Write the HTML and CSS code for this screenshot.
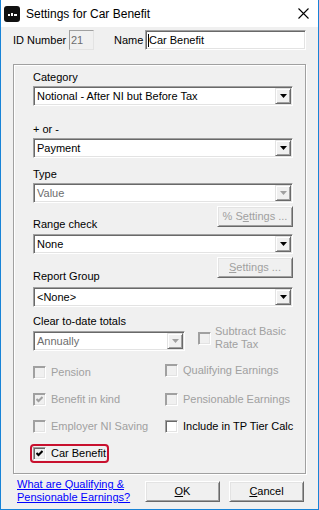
FILE: index.html
```html
<!DOCTYPE html>
<html>

<head>
    <title>Settings for Car Benefit</title>
    <link rel="stylesheet" href="styles.css">
</head>

<body>
    <div class="window">

        <!-- title bar -->
        <div class="titlebar">
            <span class="app_icon">
                <svg width="16" height="16" viewBox="0 0 16 16">
                    <rect x="0" y="0" width="16" height="16" rx="3" fill="#111"/>
                    <rect x="4" y="8" width="2" height="2" fill="#fff"/>
                    <rect x="7" y="7" width="2" height="3" fill="#fff"/>
                    <rect x="10" y="8" width="3" height="2" fill="#fff"/>
                </svg>
            </span>
            <span class="title">Settings for Car Benefit</span>
            <span class="close">
                <svg width="11" height="11" viewBox="0 0 11 11">
                    <path d="M0.5 0.5 L10.5 10.5 M10.5 0.5 L0.5 10.5" stroke="#000" stroke-width="1.1"/>
                </svg>
            </span>
        </div>

        <div class="client">

            <!-- id + name -->
            <div class="id_row">
                <span class="id_label">ID Number</span>
                <div class="edit edit_disabled id_edit">21</div>
                <span class="name_label">Name</span>
                <div class="edit name_edit"><span class="caret"></span>Car Benefit</div>
            </div>

            <!-- settings group -->
            <div class="group">
                <div class="label">Category</div>
                <div class="combo">
                    <span class="combo_text">Notional - After NI but Before Tax</span>
                    <span class="drop"><svg width="7" height="4" viewBox="0 0 7 4"><polygon points="0,0 7,0 3.5,4" fill="#000"/></svg></span>
                </div>

                <div class="label gap_17">+ or -</div>
                <div class="combo">
                    <span class="combo_text">Payment</span>
                    <span class="drop"><svg width="7" height="4" viewBox="0 0 7 4"><polygon points="0,0 7,0 3.5,4" fill="#000"/></svg></span>
                </div>

                <div class="label gap_10">Type</div>
                <div class="combo combo_disabled">
                    <span class="combo_text">Value</span>
                    <span class="drop"><svg width="7" height="4" viewBox="0 0 7 4"><polygon points="0,0 7,0 3.5,4" fill="#a0a0a0"/></svg></span>
                </div>

                <div class="label_row row_range">
                    <div class="label">Range check</div>
                    <div class="btn btn_side btn_disabled">% S<u>e</u>ttings ...</div>
                </div>
                <div class="combo gap_3">
                    <span class="combo_text">None</span>
                    <span class="drop"><svg width="7" height="4" viewBox="0 0 7 4"><polygon points="0,0 7,0 3.5,4" fill="#000"/></svg></span>
                </div>

                <div class="label_row row_report">
                    <div class="label">Report Group</div>
                    <div class="btn btn_side btn_disabled"><u>S</u>ettings ...</div>
                </div>
                <div class="combo gap_4">
                    <span class="combo_text">&lt;None&gt;</span>
                    <span class="drop"><svg width="7" height="4" viewBox="0 0 7 4"><polygon points="0,0 7,0 3.5,4" fill="#000"/></svg></span>
                </div>

                <!-- clear totals -->
                <div class="clear_row">
                    <div class="clear_col">
                        <div class="label">Clear to-date totals</div>
                        <div class="combo combo_disabled">
                            <span class="combo_text">Annually</span>
                            <span class="drop"><svg width="7" height="4" viewBox="0 0 7 4"><polygon points="0,0 7,0 3.5,4" fill="#a0a0a0"/></svg></span>
                        </div>
                    </div>
                    <div class="check check_disabled check_two">
                        <span class="box"></span>
                        <span>Subtract Basic<br>Rate Tax</span>
                    </div>
                </div>

                <!-- checkboxes -->
                <div class="checks">
                    <div class="check check_disabled"><span class="box"></span><span>Pension</span></div>
                    <div class="check check_disabled raise"><span class="box"></span><span>Qualifying Earnings</span></div>

                    <div class="check check_disabled">
                        <span class="box"><svg width="7" height="7" viewBox="0 0 7 7"><polyline points="0.5,3 2.5,5 6.5,1" fill="none" stroke="#a0a0a0" stroke-width="2"/></svg></span>
                        <span>Benefit in kind</span>
                    </div>
                    <div class="check check_disabled"><span class="box"></span><span>Pensionable Earnings</span></div>

                    <div class="check check_disabled"><span class="box"></span><span>Employer NI Saving</span></div>
                    <div class="check"><span class="box"></span><span>Include in TP Tier Calc</span></div>

                    <div class="highlight">
                        <div class="check">
                            <span class="box box_pressed"><svg width="7" height="7" viewBox="0 0 7 7"><polyline points="0.5,3 2.5,5 6.5,1" fill="none" stroke="#000" stroke-width="2"/></svg></span>
                            <span>Car Benefit</span>
                        </div>
                    </div>
                </div>
            </div>

            <!-- footer -->
            <div class="footer">
                <a class="help_link" href="#">What are Qualifying &amp;<br>Pensionable Earnings?</a>
                <div class="footer_buttons">
                    <div class="btn"><u>O</u>K</div>
                    <div class="btn"><u>C</u>ancel</div>
                </div>
            </div>
        </div>
    </div>
</body>

</html>
```

FILE: styles.css
```css
* {
    margin: 0;
    padding: 0;
    box-sizing: border-box;
}

body {
    width: 319px;
    height: 510px;
    overflow: hidden;
    background: #fff;
    font-family: "Liberation Sans", Arial, sans-serif;
    font-size: 11px;
    line-height: 13px;
    color: #000;
}

.window {
    width: 319px;
    height: 510px;
    display: flex;
    flex-direction: column;
    border: 1px solid #1883d7;
    border-top: none;
    background: #f0f0f0;
}

/* title bar */
.titlebar {
    height: 27px;
    display: flex;
    align-items: center;
    padding-left: 3px;
    background: #fff;
}

.app_icon {
    width: 16px;
    height: 16px;
    display: flex;
}

.title {
    margin-left: 6px;
    font-size: 12px;
    line-height: 14px;
}

.close {
    margin-left: auto;
    margin-right: 9px;
    display: flex;
}

.client {
    flex: 1;
    padding: 3px 12px 0;
}

/* id row */
.id_row {
    display: flex;
    align-items: center;
    height: 20px;
}

.id_label {
    width: 56px;
}

.name_label {
    width: 31px;
    margin-left: 20px;
}

.edit {
    height: 20px;
    padding-left: 2px;
    display: flex;
    align-items: center;
    border: 1px solid;
    border-color: #a0a0a0 #fff #fff #a0a0a0;
    box-shadow: inset 1px 1px #696969, inset -1px -1px #e3e3e3;
    background: #fff;
}

.edit_disabled {
    color: #6d6d6d;
    background: #f0f0f0;
    border-color: #a0a0a0 #e3e3e3 #e3e3e3 #a0a0a0;
    box-shadow: none;
}

.id_edit {
    width: 25px;
    padding-left: 1px;
}

.name_edit {
    flex: 1;
}

.caret {
    width: 1px;
    height: 13px;
    background: #000;
    margin-right: 0;
}

/* group box */
.group {
    margin-top: 14px;
    padding: 6px 12px 13px 19px;
    border: 1px solid #a0a0a0;
    box-shadow: inset 1px 1px #fff, 1px 1px #fff;
}

.label {
    height: 13px;
    white-space: nowrap;
}

.gap_17 {
    margin-top: 17px;
}

.gap_10 {
    margin-top: 10px;
}

.gap_3 {
    margin-top: 3px !important;
}

.gap_4 {
    margin-top: 4px !important;
}

.combo {
    margin-top: 2px;
    height: 20px;
    display: flex;
    padding: 1px;
    border: 1px solid;
    border-color: #a0a0a0 #fff #fff #a0a0a0;
    box-shadow: inset 1px 1px #696969, inset -1px -1px #e3e3e3;
    background: #fff;
}

.combo_text {
    flex: 1;
    padding-left: 2px;
    display: flex;
    align-items: center;
    white-space: nowrap;
}

.combo_disabled .combo_text {
    color: #6d6d6d;
}

.drop {
    width: 16px;
    display: flex;
    align-items: center;
    justify-content: center;
    border: 1px solid;
    border-color: #e3e3e3 #696969 #696969 #e3e3e3;
    box-shadow: inset 1px 1px #fff, inset -1px -1px #a0a0a0;
    background: #f0f0f0;
}

/* label + side button rows */
.label_row {
    display: flex;
    justify-content: space-between;
    margin-top: 3px;
}

.row_range {
    height: 25px;
}

.row_report {
    height: 26px;
}

.label_row .label {
    align-self: flex-end;
}

.btn {
    width: 75px;
    height: 21px;
    display: flex;
    align-items: center;
    justify-content: center;
    border: 1px solid;
    border-color: #fff #696969 #696969 #fff;
    box-shadow: inset 1px 1px #e3e3e3, inset -1px -1px #a0a0a0;
    background: #f0f0f0;
    white-space: nowrap;
}

.btn_side {
    width: 76px;
    align-self: flex-start;
}

.btn_disabled {
    color: #a0a0a0;
}

/* clear to-date row */
.clear_row {
    display: flex;
    align-items: flex-end;
    margin-top: 8px;
}

.clear_col {
    width: 152px;
}

.clear_col .combo {
    margin-top: 3px;
}

/* checkboxes */
.check {
    display: flex;
    align-items: center;
    gap: 5px;
    height: 13px;
    white-space: nowrap;
}

.check_disabled {
    color: #a0a0a0;
}

.check_two {
    height: 26px;
    margin-left: 13px;
    gap: 4px;
}

.box {
    width: 13px;
    height: 13px;
    flex: none;
    display: flex;
    align-items: center;
    justify-content: center;
    border: 1px solid;
    border-color: #a0a0a0 #fff #fff #a0a0a0;
    box-shadow: inset 1px 1px #696969, inset -1px -1px #e3e3e3;
    background: #fff;
}

.check_disabled .box {
    background: #f0f0f0;
    box-shadow: inset 1px 1px #a0a0a0, inset -1px -1px #e3e3e3;
}

.box_pressed {
    background: #f0f0f0;
}

.checks {
    margin-top: 15px;
    display: grid;
    grid-template-columns: 132px 1fr;
    row-gap: 14px;
}

.raise {
    margin-top: -2px;
}

.highlight {
    justify-self: start;
    margin: -3px;
    padding: 1px;
    border: 2px solid #c8102e;
    border-radius: 4px;
}

.highlight .check {
    padding-right: 0;
}

/* footer */
.footer {
    display: flex;
    margin-top: 4px;
}

.help_link {
    padding-left: 4px;
    color: #0000ff;
    white-space: nowrap;
}

.footer_buttons {
    margin-left: auto;
    margin-right: 2px;
    margin-top: 3px;
    display: flex;
    gap: 9px;
}
```
